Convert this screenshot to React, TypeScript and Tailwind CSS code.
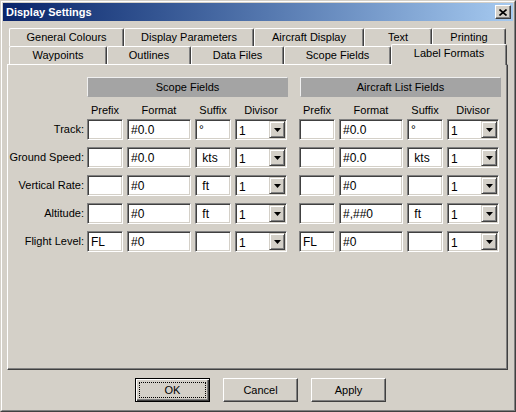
import React from "react";
import clsx from "clsx";

function Field({ w, v }: { w: string; v: string }) {
  return (
    <div
      className={clsx(
        "h-[21px] bg-white border border-t-[#808080] border-l-[#808080] border-r-white border-b-white shadow-[inset_1px_1px_0_#404040,inset_-1px_-1px_0_#d4d0c8] flex items-center pl-[3px] text-[12px] leading-none whitespace-pre overflow-hidden",
        w
      )}
    >
      {v}
    </div>
  );
}

function Combo() {
  return (
    <div className="w-[52px] h-[21px] bg-white border border-t-[#808080] border-l-[#808080] border-r-white border-b-white shadow-[inset_1px_1px_0_#404040,inset_-1px_-1px_0_#d4d0c8] flex items-center py-px pr-px pl-[3px] text-[12px] leading-none">
      <span className="flex-1 pt-[2px]">1</span>
      <div className="w-[16px] h-[17px] bg-[#d4d0c8] border border-t-[#d4d0c8] border-l-[#d4d0c8] border-r-[#404040] border-b-[#404040] shadow-[inset_1px_1px_0_#ffffff,inset_-1px_-1px_0_#808080] flex items-center justify-center">
        <svg width="7" height="4" viewBox="0 0 7 4">
          <polygon points="0,0 7,0 3.5,4" fill="#000" />
        </svg>
      </div>
    </div>
  );
}

function Group({ v }: { v: [string, string, string] }) {
  return (
    <div className="flex gap-[4px]">
      <Field w="w-[36px]" v={v[0]} />
      <Field w="w-[64px]" v={v[1]} />
      <Field w="w-[36px]" v={v[2]} />
      <Combo />
    </div>
  );
}

function Tab({ w, label }: { w: string; label: string }) {
  return (
    <div
      className={clsx(
        "h-[18px] flex items-center justify-center border-l border-t border-r border-l-white border-t-white border-r-[#404040] rounded-tl-[2px] rounded-tr-[2px] shadow-[inset_-1px_0_0_#808080]",
        w
      )}
    >
      {label}
    </div>
  );
}

function Btn({ label, def }: { label: string; def?: boolean }) {
  if (def) {
    return (
      <div className="relative w-[75px] h-[24px] border border-black shadow-[inset_1px_1px_0_#ffffff,inset_-1px_-1px_0_#404040,inset_-2px_-2px_0_#808080] flex items-center justify-center">
        {label}
        <span className="absolute inset-[3px] border border-dotted border-black" />
      </div>
    );
  }
  return (
    <div className="w-[75px] h-[24px] border border-t-white border-l-white border-r-[#404040] border-b-[#404040] shadow-[inset_-1px_-1px_0_#808080] flex items-center justify-center">
      {label}
    </div>
  );
}

const left: [string, string, string][] = [
  ["", "#0.0", "°"],
  ["", "#0.0", " kts"],
  ["", "#0", " ft"],
  ["", "#0", " ft"],
  ["FL", "#0", ""],
];
const right: [string, string, string][] = [
  ["", "#0.0", "°"],
  ["", "#0.0", " kts"],
  ["", "#0", ""],
  ["", "#,##0", " ft"],
  ["FL", "#0", ""],
];
const labels = ["Track:", "Ground Speed:", "Vertical Rate:", "Altitude:", "Flight Level:"];

function ColHeads() {
  return (
    <div className="flex gap-[4px] h-[13px] items-center">
      <div className="w-[36px] text-center">Prefix</div>
      <div className="w-[64px] text-center">Format</div>
      <div className="w-[36px] text-center">Suffix</div>
      <div className="w-[52px] text-center">Divisor</div>
    </div>
  );
}

export default function App() {
  return (
    <div className="w-[516px] h-[412px] bg-[#d4d0c8] border border-t-[#d4d0c8] border-l-[#d4d0c8] border-r-[#404040] border-b-[#404040] font-['Liberation_Sans',Arial,sans-serif] text-[11px] text-black leading-none">
      <div className="h-full border border-t-white border-l-white border-r-[#808080] border-b-[#808080] p-px flex flex-col">
        {/* title bar */}
        <div className="h-[18px] bg-gradient-to-r from-[#0a246a] to-[#a6caf0] flex items-center justify-between pl-[3px] pr-[2px]">
          <span className="text-white font-bold text-[11px]">Display Settings</span>
          <div className="w-[16px] h-[14px] bg-[#d4d0c8] border border-t-white border-l-white border-r-[#404040] border-b-[#404040] shadow-[inset_-1px_-1px_0_#808080] flex items-center justify-center">
            <svg width="8" height="7" viewBox="0 0 8 7">
              <path d="M0.5 0.5 L7.5 6.5 M7.5 0.5 L0.5 6.5" stroke="#000" strokeWidth="1.6" />
            </svg>
          </div>
        </div>

        {/* tabs */}
        <div className="mt-[7px] pl-[6px] flex">
          <Tab w="w-[115px]" label="General Colours" />
          <Tab w="w-[130px]" label="Display Parameters" />
          <Tab w="w-[110px]" label="Aircraft Display" />
          <Tab w="w-[68px]" label="Text" />
          <Tab w="w-[74px]" label="Printing" />
        </div>
        <div className="pl-[6px] flex h-[18px] items-start">
          <Tab w="w-[98px]" label="Waypoints" />
          <Tab w="w-[84px]" label="Outlines" />
          <Tab w="w-[93px]" label="Data Files" />
          <Tab w="w-[107px]" label="Scope Fields" />
          <div className="relative z-10 -mt-[2px] w-[116px] h-[21px] bg-[#d4d0c8] flex items-center justify-center pb-[3px] border-l border-t border-r border-l-white border-t-white border-r-[#404040] rounded-tl-[2px] rounded-tr-[2px] shadow-[inset_-1px_0_0_#808080]">
            Label Formats
          </div>
        </div>

        {/* panel */}
        <div className="ml-[4px] w-[501px] h-[306px] border border-t-white border-l-white border-r-[#404040] border-b-[#404040] shadow-[inset_-1px_-1px_0_#808080] pt-[12px]">
          <div className="flex ml-[79px] gap-[12px]">
            <div className="w-[201px] h-[20px] bg-[#a4a4a4] border border-t-[#f0f0f0] border-l-[#f0f0f0] border-r-[#a4a4a4] border-b-[#a4a4a4] flex items-center justify-center">
              Scope Fields
            </div>
            <div className="w-[201px] h-[20px] bg-[#a4a4a4] border border-t-[#f0f0f0] border-l-[#f0f0f0] border-r-[#a4a4a4] border-b-[#a4a4a4] flex items-center justify-center">
              Aircraft List Fields
            </div>
          </div>
          <div className="flex ml-[79px] gap-[12px] mt-[7px]">
            <ColHeads />
            <ColHeads />
          </div>
          <div className="mt-[2px] flex flex-col gap-[7px]">
            {labels.map((l, i) => (
              <div key={l} className="flex items-center">
                <div className="w-[79px] text-right pr-[3px]">{l}</div>
                <Group v={left[i]} />
                <div className="w-[12px]" />
                <Group v={right[i]} />
              </div>
            ))}
          </div>
        </div>

        {/* buttons */}
        <div className="mt-[8px] ml-[132px] flex gap-[13px]">
          <Btn label="OK" def />
          <Btn label="Cancel" />
          <Btn label="Apply" />
        </div>
      </div>
    </div>
  );
}
